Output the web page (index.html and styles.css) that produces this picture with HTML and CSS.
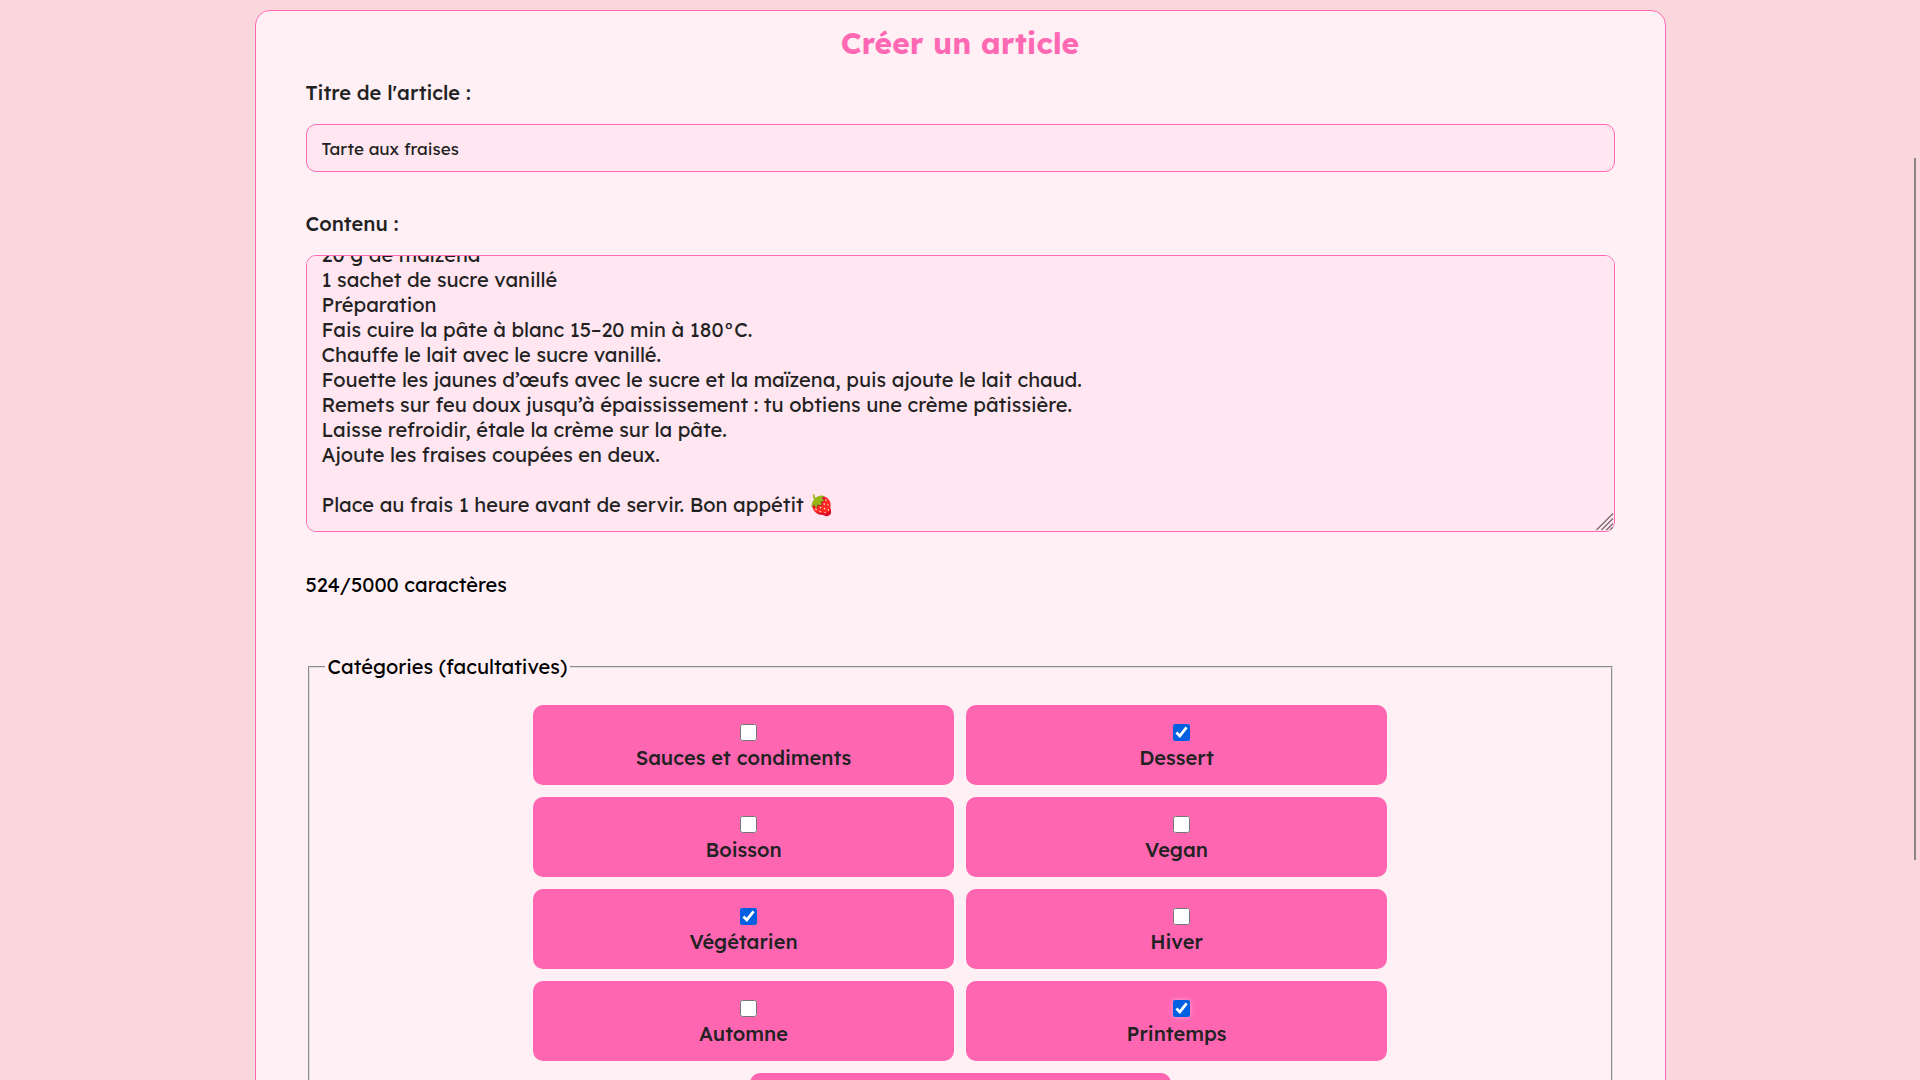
FILE: index.html
```html
<!DOCTYPE html>
<html lang="fr">
	<head>
		<meta charset="UTF-8">
		<meta name="viewport" content="width=device-width, initial-scale=1.0">
		<title>Créer un article</title>
		<link rel="stylesheet" href="styles.css">
	</head>

	<body>
		<main class="card">
			<h1>Créer un article</h1>
			<form>
				<!-- Titre -->
				<label class="fieldLabel" for="titre">Titre de l'article :</label>
				<input class="titleInput" id="titre" type="text" value="Tarte aux fraises">

				<!-- Contenu -->
				<label class="fieldLabel" for="contenu">Contenu :</label>
				<div class="contentBox">
					<textarea id="contenu" maxlength="5000">Ingrédients
1 pâte sablée
500 g de fraises
25 cl de lait
2 jaunes d’œufs
50 g de sucre
20 g de maïzena
1 sachet de sucre vanillé
Préparation
Fais cuire la pâte à blanc 15–20 min à 180°C.
Chauffe le lait avec le sucre vanillé.
Fouette les jaunes d’œufs avec le sucre et la maïzena, puis ajoute le lait chaud.
Remets sur feu doux jusqu’à épaississement : tu obtiens une crème pâtissière.
Laisse refroidir, étale la crème sur la pâte.
Ajoute les fraises coupées en deux.

Place au frais 1 heure avant de servir. Bon appétit 🍓</textarea>
					<svg class="grip" width="18" height="18" viewBox="0 0 18 18" aria-hidden="true">
						<path d="M0.5 17 L17 0.5 M5.5 17 L17 5.5 M10.5 17 L17 10.5 M14.5 16.5 L16.5 14.5" stroke="#75696f" stroke-width="1.2" fill="none"/>
					</svg>
				</div>
				<p class="counter">524/5000 caractères</p>

				<!-- Catégories -->
				<fieldset>
					<legend>Catégories (facultatives)</legend>
					<div class="categories">
						<label class="category"><input type="checkbox"><span>Sauces et condiments</span></label>
						<label class="category"><input type="checkbox" checked><span>Dessert</span></label>
						<label class="category"><input type="checkbox"><span>Boisson</span></label>
						<label class="category"><input type="checkbox"><span>Vegan</span></label>
						<label class="category"><input type="checkbox" checked><span>Végétarien</span></label>
						<label class="category"><input type="checkbox"><span>Hiver</span></label>
						<label class="category"><input type="checkbox"><span>Automne</span></label>
						<label class="category"><input class="glow" type="checkbox" checked><span>Printemps</span></label>
						<label class="category"><input type="checkbox"><span>Été</span></label>
					</div>
				</fieldset>
			</form>
		</main>
		<div class="scrollThumb"></div>

		<script>
			var contenu = document.getElementById("contenu");
			contenu.scrollTop = contenu.scrollHeight;
		</script>
	</body>
</html>
```
FILE: styles.css
```css
* {
	box-sizing: border-box;
}

html {
	scrollbar-width: none;
}

body {
	margin: 0;
	padding: 10px;
	background: #fad7dc;
	color: #000;
	font-family: Lexend, Inter, sans-serif;
	font-size: 20px;
	line-height: 25px;
}

.card {
	max-width: 1411px;
	margin: 0 auto;
	padding: 12px 50px;
	background: #fff0f5;
	border: 1px solid #ff69b4;
	border-radius: 15px;
}

h1 {
	margin: 0;
	color: #ff69b4;
	font-size: 30px;
	line-height: 40px;
	text-align: center;
}

.fieldLabel {
	display: block;
	margin: 17px 0 19px;
	color: #222;
	font-weight: 500;
}

.titleInput,
textarea {
	display: block;
	width: 100%;
	color: #222;
	background: #ffe6f0;
	border: 1px solid #ff69b4;
	border-radius: 10px;
	font-family: inherit;
}

.titleInput {
	height: 48px;
	margin-bottom: 39px;
	padding: 12px 15px;
	font-size: 17px;
}

.contentBox {
	position: relative;
}

textarea {
	height: 277px;
	padding: 12px 15px 14px;
	font-size: inherit;
	line-height: inherit;
	resize: none;
	scrollbar-width: none;
}

.grip {
	position: absolute;
	right: 1px;
	bottom: 1px;
}

.counter {
	margin: 40px 0 57px;
}

fieldset {
	margin: 0 2px;
	padding: 26px 15px 20px;
	border: 2px groove #e0e0e0;
}

legend {
	padding: 0 3px;
}

.categories {
	display: flex;
	flex-wrap: wrap;
	justify-content: center;
	gap: 12px;
	max-width: 854px;
	margin: 0 auto;
}

.category {
	display: flex;
	flex-direction: column;
	align-items: center;
	width: calc(50% - 6px);
	height: 80px;
	padding-top: 19px;
	color: #222;
	background: #ff66b2;
	border-radius: 10px;
	font-weight: 500;
}

.category input {
	width: 17px;
	height: 17px;
	margin: 0 0 4px 10px;
	accent-color: #0060df;
}

.category .glow {
	border-radius: 3px;
	box-shadow: 0 0 5px rgba(255, 255, 255, 0.4);
}

.scrollThumb {
	position: fixed;
	top: 158px;
	right: 4px;
	width: 2px;
	height: 65vh;
	background: #8a8486;
}
```
